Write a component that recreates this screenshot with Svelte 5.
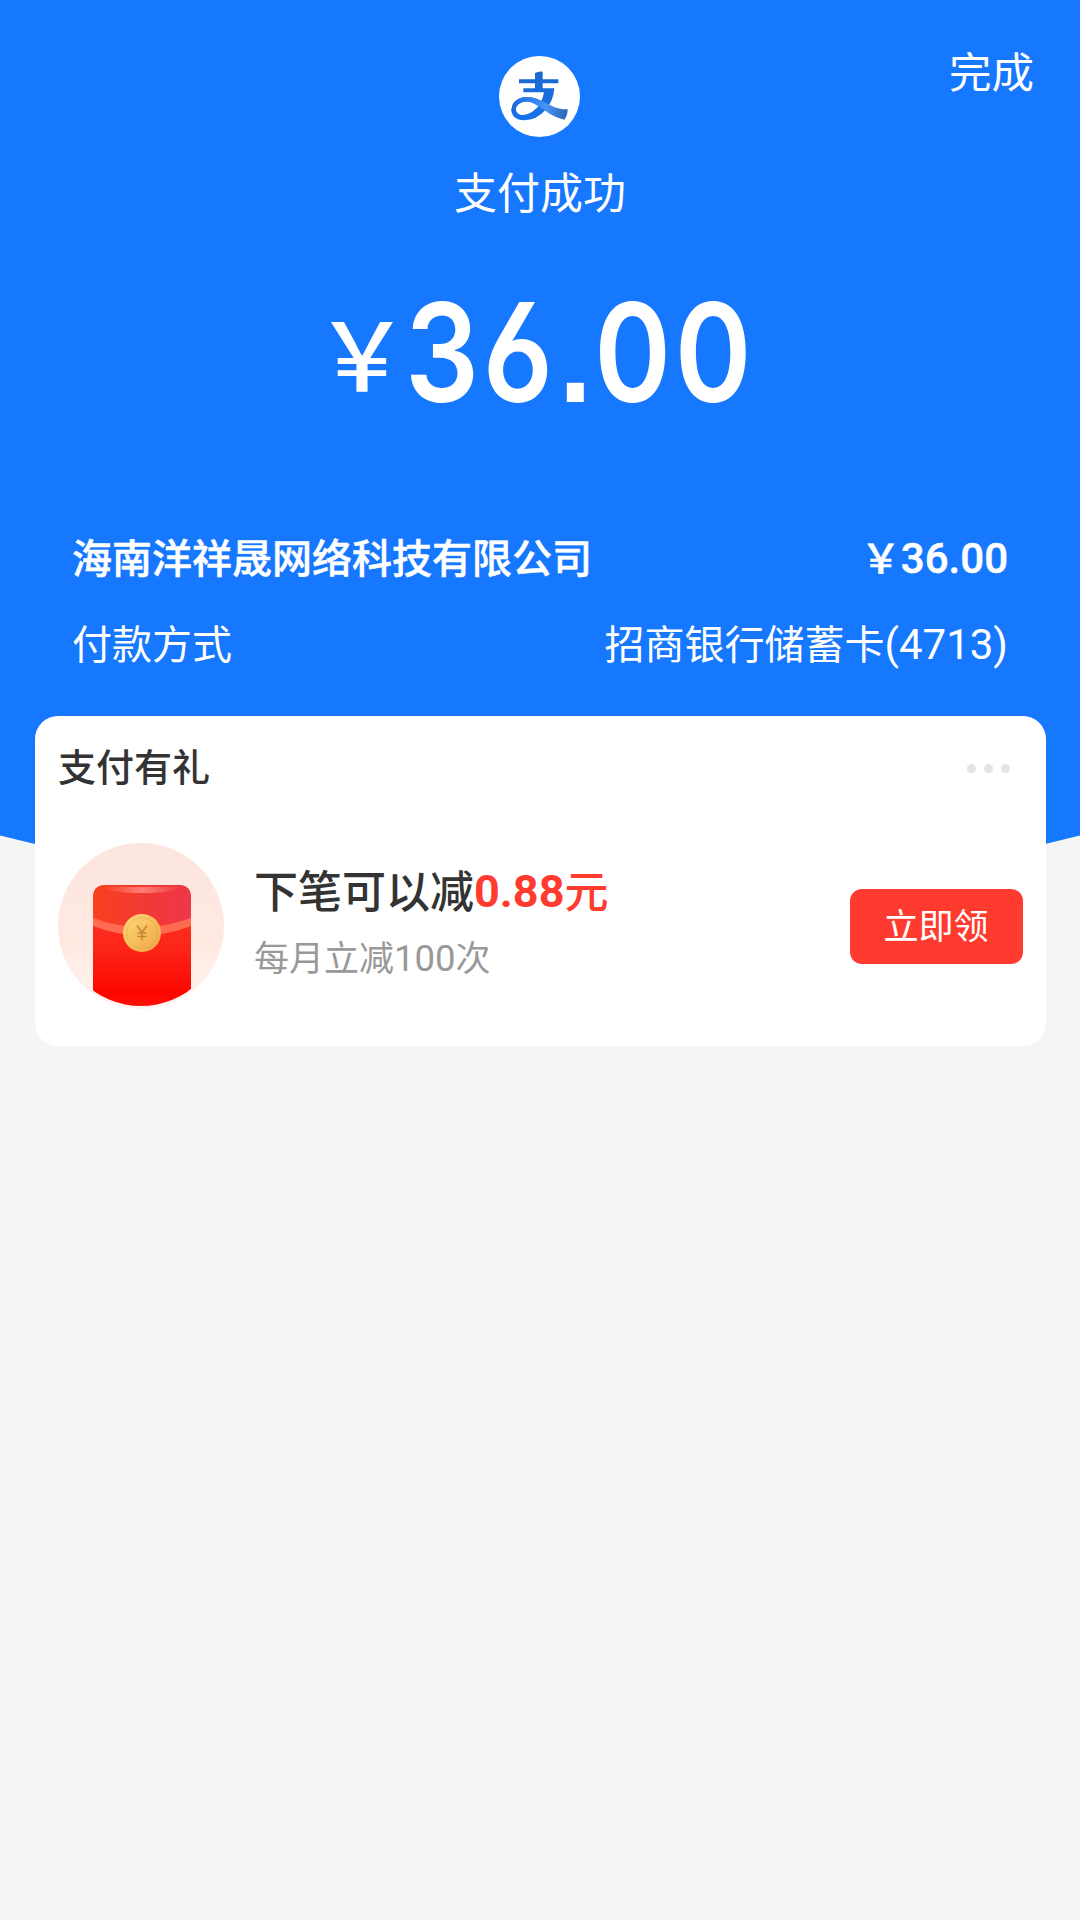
<script>
    const payment = {
        amount: '36.00',
        merchant: '海南洋祥晟网络科技有限公司',
        bank: '招商银行储蓄卡',
        tail: '(4713)'
    };

    const gift = {
        title: '下笔可以减',
        discount: '0.88'
    };
</script>

<main class="page">
    <header class="hero">
        <button class="done">完成</button>
        <svg class="logo" viewBox="177 46 243 243" aria-hidden="true">
            <defs>
                <linearGradient id="tail" gradientUnits="userSpaceOnUse" x1="215" y1="200" x2="383" y2="220">
                    <stop offset="0" stop-color="#1668dc" />
                    <stop offset=".3" stop-color="#2f80f0" />
                    <stop offset=".62" stop-color="#4a93f6" />
                    <stop offset="1" stop-color="#2a62b4" />
                </linearGradient>
                <linearGradient id="stem" x1="0" y1="0" x2="0" y2="1">
                    <stop offset="0" stop-color="#1b66cf" />
                    <stop offset="1" stop-color="#1673ee" />
                </linearGradient>
            </defs>
            <circle cx="298.500" cy="167.500" r="121.500" fill="#fff" />
            <path d="M285 97Q297 91 308 93V116H355V128H308V143H343Q341 180 316 208Q291 238 252 239Q216 237 214 208Q216 178 249 170Q279 166 304 181L297 193Q270 177 247 185Q225 193 228 209Q232 224 250 223Q280 219 300 190Q309 173 312 155H250V143H285V128H237V116H285Z" fill="url(#stem)" />
            <path d="M214 208Q216 178 249 170Q270 167 289 174Q313 183 336 196Q358 207 383 206Q383 225 373 237Q343 230 321 214Q286 188 267 183Q250 180 237 189Q225 199 228 211Q217 218 214 208Z" fill="url(#tail)" />
        </svg>
        <p class="status">支付成功</p>
        <p class="amount"><span class="yen">￥</span><span class="digits">{payment.amount}</span></p>
        <dl class="details">
            <div class="row strong">
                <dt>{payment.merchant}</dt>
                <dd>￥<span class="num">{payment.amount}</span></dd>
            </div>
            <div class="row">
                <dt>付款方式</dt>
                <dd>{payment.bank}<span class="num">{payment.tail}</span></dd>
            </div>
        </dl>
    </header>

    <section class="card">
        <div class="card-head">
            <h2>支付有礼</h2>
            <div class="more"><i></i><i></i><i></i></div>
        </div>
        <div class="gift">
            <svg class="packet" viewBox="0 0 166 166" aria-hidden="true">
                <defs>
                    <linearGradient id="peach" x1="0" y1="0" x2="0" y2="1">
                        <stop offset="0" stop-color="#fde5df" />
                        <stop offset=".6" stop-color="#ffe9e1" />
                        <stop offset="1" stop-color="#fff5f2" />
                    </linearGradient>
                    <linearGradient id="red" x1="0" y1="0" x2="0" y2="1">
                        <stop offset="0" stop-color="#fb3a2c" />
                        <stop offset=".5" stop-color="#fc2517" />
                        <stop offset=".85" stop-color="#fd0500" />
                        <stop offset="1" stop-color="#ff1709" />
                    </linearGradient>
                    <linearGradient id="flap" x1="0" y1="0" x2="1" y2="0">
                        <stop offset="0" stop-color="#f9401f" />
                        <stop offset=".5" stop-color="#f23a32" />
                        <stop offset="1" stop-color="#ee374a" />
                    </linearGradient>
                    <linearGradient id="shine" x1="0" y1="0" x2="1" y2="0">
                        <stop offset="0" stop-color="#ff8f88" stop-opacity="0" />
                        <stop offset=".5" stop-color="#ff8f88" stop-opacity=".8" />
                        <stop offset="1" stop-color="#ff8f88" stop-opacity="0" />
                    </linearGradient>
                    <linearGradient id="gold" x1="0" y1="0" x2="1" y2="1">
                        <stop offset="0" stop-color="#ffdc78" />
                        <stop offset="1" stop-color="#f0a343" />
                    </linearGradient>
                    <clipPath id="round"><circle cx="83" cy="81" r="82" /></clipPath>
                </defs>
                <circle cx="83" cy="83" r="83" fill="url(#peach)" />
                <g clip-path="url(#round)">
                    <path d="M35 170V55Q35 42 48 42H120Q133 42 133 55V170Z" fill="url(#red)" />
                    <path d="M35 77V55Q35 42 48 42H120Q133 42 133 55V77Q84 98 35 77Z" fill="url(#flap)" />
                    <path d="M45 44H123Q113 50 84 50T45 44Z" fill="url(#shine)" />
                    <path d="M35 75Q84 93 133 75V83Q84 102 35 83Z" fill="#ff6b50" />
                </g>
                <circle cx="84" cy="90" r="19" fill="url(#gold)" />
                <circle cx="84" cy="90" r="15.500" fill="none" stroke="#dc9b42" stroke-opacity=".45" />
                <path d="M79 82.500L84 89.500L89 82.500M84 89.500V97.500M79.500 90H88.500M79.500 93.500H88.500" fill="none" stroke="#b9782b" stroke-opacity=".8" stroke-width="1.600" />
            </svg>
            <div class="gift-text">
                <h3>{gift.title}<em><b>{gift.discount}</b>元</em></h3>
                <p>每月立减<span>100</span>次</p>
            </div>
            <button class="claim">立即领</button>
        </div>
    </section>
</main>

<style>
:global(body) {
    background: #f5f5f5;
}
.page {
    position: relative;
    min-height: 1920px;
    font-family: Roboto, "Noto Sans CJK SC", sans-serif;
    color: #333;
}
.page::before {
    content: "";
    position: absolute;
    inset: 0 0 auto;
    height: 870px;
    background: #1677ff;
    clip-path: polygon(0 0, 100% 0, 100% 835.500px, 1045px 844px, 900px 870px, 180px 870px, 35px 844px, 0 835.500px);
}
.hero {
    position: relative;
    box-sizing: border-box;
    height: 716px;
    padding-top: 56px;
    display: flex;
    flex-direction: column;
    align-items: center;
    color: #fff;
}
p, h2, h3, dl, dd {
    margin: 0;
}
button {
    border: none;
    font-family: inherit;
    color: #fff;
    padding: 0;
}
.done {
    position: absolute;
    top: 44px;
    right: 46px;
    background: none;
    font-size: 42.500px;
    line-height: 60px;
}
.logo {
    width: 81px;
    height: 81px;
    margin-right: 1px;
    flex: none;
}
.status {
    margin-top: 27px;
    font-size: 43px;
    line-height: 60px;
}
.amount {
    display: flex;
    align-items: baseline;
    width: 451px;
    height: 170px;
    margin-top: 43px;
    font-size: 137px;
    line-height: 170px;
}
.yen {
    position: relative;
    top: -10px;
    margin-right: -5px;
    font-size: 95px;
    font-weight: 500;
    line-height: 1;
}
.digits {
    font-family: Inter, Roboto, sans-serif;
    font-weight: 600;
    font-feature-settings: "cv03", "ss07";
    letter-spacing: 4.300px;
    transform: scaleX(.85);
    transform-origin: left;
}
.details {
    width: 936px;
    margin-top: 95px;
    display: flex;
    flex-direction: column;
    gap: 30px;
}
.row {
    display: flex;
    justify-content: space-between;
    height: 56px;
    font-size: 40px;
    line-height: 56px;
}
.num {
    font-size: 42px;
    line-height: 1;
}
.strong {
    font-weight: 500;
    -webkit-text-stroke: .5px #fff;
}
.card {
    position: relative;
    box-sizing: border-box;
    width: 1011px;
    height: 330px;
    margin-left: 35px;
    padding: 24px 23px 0;
    border-radius: 23px;
    background: #fff;
}
.card-head {
    display: flex;
    justify-content: space-between;
    align-items: center;
}
h2 {
    font-size: 38px;
    font-weight: 500;
    line-height: 56px;
}
.more {
    display: flex;
    gap: 8px;
    margin-right: 13px;
}
.more i {
    width: 9px;
    height: 9px;
    border-radius: 50%;
    background: #e5e5e5;
}
.gift {
    display: flex;
    align-items: center;
    margin-top: 47px;
}
.packet {
    width: 166px;
    height: 166px;
    flex: none;
}
.gift-text {
    flex: 1;
    margin: 0 0 5px 30px;
}
h3 {
    font-size: 44px;
    font-weight: 500;
    line-height: 64px;
}
h3 em {
    color: #ff3b30;
    font-style: normal;
}
h3 b {
    position: relative;
    top: -1px;
    font-size: 45px;
    font-weight: 700;
    line-height: 1;
}
.gift-text p {
    margin-top: 9px;
    color: #999;
    font-size: 35px;
    line-height: 52px;
}
.gift-text span {
    font-size: 36.500px;
    line-height: 1;
}
.claim {
    width: 173px;
    height: 75px;
    padding: 0 1px 6px 0;
    border-radius: 12px;
    background: #ff3b30;
    font-size: 35px;
}
</style>
